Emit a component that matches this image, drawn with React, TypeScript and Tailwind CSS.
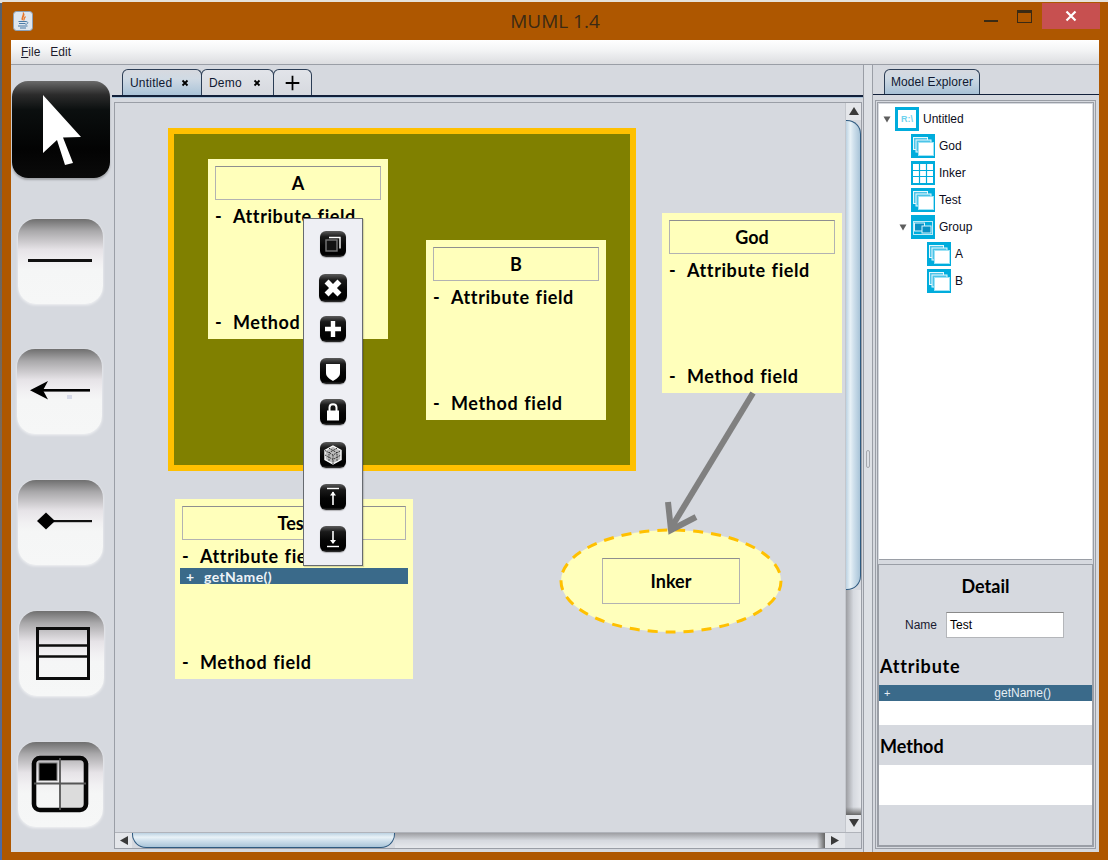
import React from "react";

const COMIC = "font-['Lato','Liberation_Sans',sans-serif] font-bold";
const ARIAL = "font-['Liberation_Sans',Arial,sans-serif]";

function BlackBtn({ className, children }: { className: string; children: React.ReactNode }) {
  return (
    <div className={"rounded-[6px] bg-[linear-gradient(180deg,#5c5c5c_0%,#1a1a1a_22%,#050505_55%,#000_90%,#333_100%)] shadow-[0_1px_1px_rgba(0,0,0,0.25)] " + className}>
      {children}
    </div>
  );
}

function Glyph({ children, size = 26 }: { children: React.ReactNode; size?: number }) {
  return (
    <svg width={size} height={size} viewBox="0 0 26 26" className="block">
      {children}
    </svg>
  );
}

function PopupMenu() {
  return (
    <div className="absolute left-[188px] top-[115px] w-[60px] h-[348px] bg-[#eeeff4] border border-[#666a70] flex flex-col items-center pt-[12px] shadow-[1px_1px_1px_rgba(0,0,0,0.15)]">
      <BlackBtn className="w-[26px] h-[26px]">
        <Glyph>
          <path d="M9 6.5H20V17.5" fill="none" stroke="#fff" strokeWidth="1.4" />
          <rect x="6" y="9" width="11" height="11" fill="#111" stroke="#777" strokeWidth="1.4" />
        </Glyph>
      </BlackBtn>
      <BlackBtn className="w-[28px] h-[28px] mt-[17px]">
        <Glyph size={28}>
          <path d="M7 7L19 19M19 7L7 19" stroke="#fff" strokeWidth="5.2" />
        </Glyph>
      </BlackBtn>
      <BlackBtn className="w-[26px] h-[26px] mt-[14px]">
        <Glyph>
          <path d="M13 5V21M5 13H21" stroke="#fff" strokeWidth="4.4" />
        </Glyph>
      </BlackBtn>
      <BlackBtn className="w-[26px] h-[26px] mt-[16px]">
        <Glyph>
          <path d="M6 6H20V15C20 19 16 21 13 23C10 21 6 19 6 15Z" fill="#fff" />
        </Glyph>
      </BlackBtn>
      <BlackBtn className="w-[26px] h-[26px] mt-[15px]">
        <Glyph>
          <rect x="7" y="11.5" width="12" height="10" fill="#fff" />
          <path d="M9.5 12V8.5C9.5 4 16.5 4 16.5 8.5V12" fill="none" stroke="#fff" strokeWidth="2" />
        </Glyph>
      </BlackBtn>
      <BlackBtn className="w-[26px] h-[26px] mt-[17px]">
        <Glyph>
          <path d="M13 4L21 8.5V17.5L13 22L5 17.5V8.5Z" fill="#bbb" stroke="#fff" strokeWidth="1.4" />
          <path d="M5 8.5L13 13L21 8.5M13 13V22M9 6.2L17 10.8V19.8M17 6.2L9 10.8V19.8M5 13L13 17.5L21 13" fill="none" stroke="#222" strokeWidth="0.9" strokeDasharray="1.6 1" />
        </Glyph>
      </BlackBtn>
      <BlackBtn className="w-[26px] h-[26px] mt-[16px]">
        <Glyph>
          <path d="M7 4.5H19" stroke="#fff" strokeWidth="1.4" />
          <path d="M13 8V21" stroke="#fff" strokeWidth="1.6" />
          <path d="M10 11.5L13 7.5L16 11.5Z" fill="#fff" />
        </Glyph>
      </BlackBtn>
      <BlackBtn className="w-[26px] h-[26px] mt-[16px]">
        <Glyph>
          <path d="M7 20.5H19" stroke="#fff" strokeWidth="1.4" />
          <path d="M13 5V17" stroke="#fff" strokeWidth="1.6" />
          <path d="M10 14L13 18L16 14Z" fill="#fff" />
        </Glyph>
      </BlackBtn>
    </div>
  );
}

function Field({ children, className = "" }: { children: React.ReactNode; className?: string }) {
  return (
    <div className={COMIC + " flex text-[18px] leading-[24px] text-black whitespace-nowrap [word-spacing:1px] tracking-[0.6px] " + className}>
      <span className="w-[18px]">-</span>
      <span>{children}</span>
    </div>
  );
}

function Header({ children, h = "h-[34px]" }: { children: React.ReactNode; h?: string }) {
  return (
    <div className={"border border-[#b2b2b2] border-t-[#8f8f8f] flex items-center justify-center " + h}>
      <span className={COMIC + " text-[18px] text-black"}>{children}</span>
    </div>
  );
}

function ClassNode({ pos, title }: { pos: string; title: string }) {
  return (
    <div className={"absolute bg-[#ffffbb] flex flex-col px-[7px] pt-[7px] pb-[5px] w-[180px] h-[180px] " + pos}>
      <Header>{title}</Header>
      <Field className="mt-[4px]">Attribute field</Field>
      <Field className="mt-auto">Method field</Field>
    </div>
  );
}

function TestNode() {
  return (
    <div className="absolute left-[60px] top-[396px] w-[238px] h-[180px] bg-[#ffffbb] flex flex-col pt-[7px] pb-[5px]">
      <div className="mx-[7px]">
        <Header>Test</Header>
      </div>
      <Field className="mx-[7px] mt-[4px]">Attribute field</Field>
      <div className={"mx-[5px] h-[16px] bg-[#3a6a8a] text-[#eef4f8] flex items-center pl-[6px] text-[14px] tracking-[0.4px] " + COMIC}>
        <span className="w-[18px]">+</span>
        <span>getName()</span>
      </div>
      <Field className="mx-[7px] mt-auto">Method field</Field>
    </div>
  );
}

function Canvas() {
  return (
    <div className="relative flex-1 overflow-hidden">
      <div className="absolute left-[53px] top-[25px] w-[468px] h-[343px] border-[6px] border-[#ffc000] bg-[#808000]" />
      <ClassNode pos="left-[93px] top-[56px]" title="A" />
      <ClassNode pos="left-[311px] top-[137px]" title="B" />
      <ClassNode pos="left-[547px] top-[110px]" title="God" />
      <TestNode />
      <svg className="absolute left-[440px] top-[285px]" width="240" height="250" viewBox="0 0 240 250">
        <ellipse cx="116" cy="193" rx="110" ry="51" fill="#ffffbb" stroke="#ffc000" strokeWidth="3" strokeDasharray="10 8" />
        <path d="M198 5L116 140" stroke="#808080" strokeWidth="6" fill="none" />
        <path d="M113 114L116 142L141 129" stroke="#808080" strokeWidth="6" fill="none" />
      </svg>
      <div className="absolute left-[487px] top-[455px] w-[138px] h-[46px] border border-[#b2b2b2] border-t-[#8f8f8f] flex items-center justify-center">
        <span className={COMIC + " text-[18px] text-black"}>Inker</span>
      </div>
      <PopupMenu />
    </div>
  );
}

function Triangle({ dir }: { dir: "up" | "down" | "left" | "right" }) {
  const d = {
    up: "M0 8L5 0L10 8Z",
    down: "M0 0L10 0L5 8Z",
    left: "M9 0V9L1 4.5Z",
    right: "M1 0V9L9 4.5Z",
  }[dir];
  return (
    <svg width="10" height="9" viewBox="0 0 10 9" className="block">
      <path d={d} fill="#3a3a3a" />
    </svg>
  );
}

function VScroll() {
  return (
    <div className="w-[16px] flex flex-col border-l border-[#c4c7cd]">
      <div className="h-[17px] bg-[#e4e6ea] flex items-center justify-center">
        <Triangle dir="up" />
      </div>
      <div className="h-[470px] w-[15px] rounded-r-[14px] border border-l-0 border-[#2f5a80] bg-[linear-gradient(90deg,#bcd2e2_0%,#e9f2f7_30%,#cfe0ec_55%,#a9c4d8_100%)]" />
      <div className="flex-1 bg-[linear-gradient(90deg,#9d9ea2_0%,#d6d9df_50%,#e6e8ec_100%)] flex flex-col justify-end">
        <div className="h-[8px] bg-[linear-gradient(180deg,transparent,#666)]" />
      </div>
      <div className="h-[17px] bg-[#e4e6ea] flex items-center justify-center">
        <Triangle dir="down" />
      </div>
    </div>
  );
}

function HScroll() {
  return (
    <div className="h-[16px] flex border-t border-[#b0b3ba]">
      <div className="w-[17px] bg-[#e4e6ea] flex items-center justify-center">
        <Triangle dir="left" />
      </div>
      <div className="w-[263px] h-[15px] rounded-b-[14px] border border-t-0 border-[#2f5a80] bg-[linear-gradient(180deg,#bcd2e2_0%,#e9f2f7_30%,#cfe0ec_55%,#a9c4d8_100%)]" />
      <div className="flex-1 bg-[linear-gradient(180deg,#9d9ea2_0%,#d6d9df_50%,#e6e8ec_100%)] flex justify-end">
        <div className="w-[8px] bg-[linear-gradient(90deg,transparent,#666)]" />
      </div>
      <div className="w-[20px] bg-[#e4e6ea] flex items-center justify-center">
        <Triangle dir="right" />
      </div>
      <div className="w-[16px] bg-[#d6d9df]" />
    </div>
  );
}

function Tab({ label, active, close, w }: { label?: string; active?: boolean; close?: boolean; w: string }) {
  return (
    <div
      className={
        "h-[26px] rounded-t-[6px] border border-b-0 border-[#2b3d55] flex items-center -mr-px " +
        w +
        (active
          ? " bg-[linear-gradient(180deg,#d6d9df_0%,#d0dae4_35%,#aac3d8_100%)]"
          : " bg-[linear-gradient(180deg,#e2e4e9_0%,#d6d9df_100%)]")
      }
    >
      {label ? (
        <span className={ARIAL + " text-[12px] text-[#0f1830] pl-[7px] tracking-[0.2px]"}>{label}</span>
      ) : (
        <svg width="38" height="24" viewBox="0 0 38 24" className="block">
          <path d="M19 4.5V19.5M12 12H26" stroke="#000" strokeWidth="1.8" />
        </svg>
      )}
      {close && (
        <svg width="8" height="8" viewBox="0 0 8 8" className="block ml-auto mr-[12px]">
          <path d="M1.5 1.5L6.5 6.5M6.5 1.5L1.5 6.5" stroke="#000" strokeWidth="1.8" />
        </svg>
      )}
    </div>
  );
}

function WhiteBtn({ className, children }: { className: string; children: React.ReactNode }) {
  return (
    <div className={"w-[85px] h-[85px] rounded-[18px] bg-[linear-gradient(180deg,#6f6f6f_0%,#a9a8aa_14%,#e6e3e7_36%,#f1f0f2_50%,#f5f6f6_60%,#f6f7f7_100%)] shadow-[0_1px_3px_rgba(255,255,255,0.7)] " + className}>
      <svg width="85" height="85" viewBox="0 0 85 85" className="block">
        {children}
      </svg>
    </div>
  );
}

function Toolbar() {
  return (
    <div className="w-[103px] flex flex-col">
      <div className="ml-[1px] mt-[16px] w-[98px] h-[97px] rounded-[16px] bg-[linear-gradient(180deg,#6a6a6a_0%,#2c2c2c_14%,#0b0f0f_30%,#030303_70%,#0a0a0a_100%)] shadow-[0_2px_2px_rgba(0,0,0,0.25)]">
        <svg width="98" height="97" viewBox="0 0 98 97" className="block">
          <path d="M31 14L69 56L51 56.5L61 82L53 84L45 59L31 72Z" fill="#fff" />
        </svg>
      </div>
      <WhiteBtn className="ml-[7px] mt-[41px]">
        <rect x="10" y="40" width="64" height="3" fill="#111" />
      </WhiteBtn>
      <WhiteBtn className="ml-[6px] mt-[45px]">
        <rect x="25" y="40" width="48" height="2.6" fill="#000" />
        <path d="M13 41.3L31 32L26 41.3L31 50.5Z" fill="#000" />
        <rect x="50" y="46" width="5" height="4" fill="#d6d9e8" />
      </WhiteBtn>
      <WhiteBtn className="ml-[7px] mt-[46px]">
        <rect x="28" y="40" width="46" height="2.2" fill="#111" />
        <path d="M28 32.5L37 41L28 49.5L19 41Z" fill="#000" />
      </WhiteBtn>
      <WhiteBtn className="ml-[8px] mt-[46px]">
        <rect x="18.5" y="17.5" width="51" height="50" fill="none" stroke="#0c0c0c" strokeWidth="3" />
        <path d="M18 34.5H70M18 45.5H70" stroke="#0c0c0c" strokeWidth="2.4" />
      </WhiteBtn>
      <WhiteBtn className="ml-[7px] mt-[46px]">
        <path d="M43 42H68V67H43Z" fill="#dcdcdc" />
        <rect x="16" y="16" width="52" height="52" rx="6" fill="none" stroke="#060606" strokeWidth="4.6" />
        <path d="M42 16V68M16 41.5H68" stroke="#555" strokeWidth="1.8" />
        <rect x="21" y="21" width="18" height="17.5" fill="#000" stroke="#777" strokeWidth="1" />
      </WhiteBtn>
    </div>
  );
}

function TreeIconBox({ children }: { children: React.ReactNode }) {
  return (
    <svg width="24" height="24" viewBox="0 0 24 24" className="block shrink-0">
      <rect width="24" height="24" fill="#00acdc" />
      {children}
    </svg>
  );
}

function StackIcon() {
  return (
    <TreeIconBox>
      <rect x="2.5" y="3.5" width="14" height="12" fill="#4cc4e8" stroke="#e6f8fd" />
      <rect x="5" y="6" width="15" height="12" fill="#4cc4e8" stroke="#e6f8fd" />
      <rect x="7.5" y="8.5" width="15" height="13" fill="#fff" stroke="#9fe3f5" />
    </TreeIconBox>
  );
}

function GridIcon() {
  return (
    <TreeIconBox>
      <rect x="2" y="3" width="20" height="19" fill="#fff" />
      <path d="M8.5 3V22M15.5 3V22M2 9.5H22M2 15.5H22" stroke="#00acdc" strokeWidth="1.2" />
    </TreeIconBox>
  );
}

function GroupIcon() {
  return (
    <TreeIconBox>
      <rect x="2.5" y="6.5" width="19" height="13" fill="none" stroke="#bfeaf7" />
      <rect x="3.5" y="8" width="10" height="8" fill="#0a90c4" stroke="#d9f3fb" />
      <rect x="11" y="11" width="9" height="7" fill="#0a90c4" stroke="#d9f3fb" />
    </TreeIconBox>
  );
}

function RootIcon() {
  return (
    <TreeIconBox>
      <rect x="3" y="3" width="18" height="18" fill="#fff" />
      <text x="12" y="15" textAnchor="middle" fontSize="9" fontWeight="700" fill="#6fd2ee" fontFamily="Liberation Sans">R:\</text>
    </TreeIconBox>
  );
}

function Caret() {
  return (
    <svg width="8" height="7" viewBox="0 0 8 7" className="block shrink-0">
      <path d="M0.5 0.5H7.5L4 6.5Z" fill="#5e5e5e" />
    </svg>
  );
}

function TreeRow({ pad, caret, icon, label }: { pad: string; caret?: boolean; icon: React.ReactNode; label: string }) {
  return (
    <div className={"h-[27px] flex items-start gap-[4px] " + pad}>
      {caret && <div className="w-[8px] -ml-[12px] h-[24px] flex items-center"><Caret /></div>}
      {icon}
      <span className={ARIAL + " text-[12px] leading-[24px] text-[#0c0c20]"}>{label}</span>
    </div>
  );
}

function RightPanel() {
  return (
    <div className="w-[226px] flex flex-col">
      <div className="h-[30px] pt-[4px] pl-[11px] border-b border-[#12203a]">
        <div className="w-[96px] h-[25px] rounded-t-[6px] border border-b-0 border-[#2b3d55] bg-[linear-gradient(180deg,#d6d9df_0%,#ced9e3_35%,#a8c1d6_100%)] flex items-center justify-center">
          <span className={ARIAL + " text-[12px] text-[#0f1830] tracking-[0.1px]"}>Model Explorer</span>
        </div>
      </div>
      <div className="mt-[5px] ml-[2px] w-[221px] h-[749px] border border-[#9a9ea6] p-[1px]">
        <div className="h-full border border-[#9a9ea6] flex flex-col">
          <div className="mx-[1px] mt-[1px] h-[457px] bg-white border-b border-[#9a9ea6] pt-[3px]">
            <TreeRow pad="pl-[16px]" caret icon={<RootIcon />} label="Untitled" />
            <TreeRow pad="pl-[32px]" icon={<StackIcon />} label="God" />
            <TreeRow pad="pl-[32px]" icon={<GridIcon />} label="Inker" />
            <TreeRow pad="pl-[32px]" icon={<StackIcon />} label="Test" />
            <TreeRow pad="pl-[32px]" caret icon={<GroupIcon />} label="Group" />
            <TreeRow pad="pl-[48px]" icon={<StackIcon />} label="A" />
            <TreeRow pad="pl-[48px]" icon={<StackIcon />} label="B" />
          </div>
          <div className="mt-[4px] h-[282px] border border-[#9a9ea6] flex flex-col">
            <div className={COMIC + " text-[18px] leading-[24px] text-black text-center mt-[9px]"}>Detail</div>
            <div className="mt-[14px] flex items-center pl-[26px] gap-[9px]">
              <span className={ARIAL + " text-[12px] text-[#1a1a30]"}>Name</span>
              <div className={ARIAL + " w-[118px] h-[26px] bg-white border border-[#b4b6ba] border-t-[#8a8a8a] flex items-center pl-[3px] text-[12px] text-black"}>Test</div>
            </div>
            <div className={COMIC + " text-[18px] leading-[24px] text-black mt-[16px] ml-[1px] tracking-[0.8px]"}>Attribute</div>
            <div className="mt-[7px] h-[16px] bg-[#3a6a8a] flex items-center justify-between pl-[5px] pr-[41px]">
              <span className={ARIAL + " text-[11px] text-[#e6eef4]"}>+</span>
              <span className={ARIAL + " text-[12px] text-[#e6eef4]"}>getName()</span>
            </div>
            <div className="h-[24px] bg-white" />
            <div className={COMIC + " text-[18px] leading-[24px] text-black mt-[9px] ml-[1px]"}>Method</div>
            <div className="mt-[7px] h-[40px] bg-white" />
          </div>
        </div>
      </div>
    </div>
  );
}

export default function App() {
  return (
    <div className="w-[1108px] h-[860px] overflow-hidden bg-[linear-gradient(180deg,#e6e2da_0px,#e6e2da_3px,#55606e_3px,#7a6a5a_50%,#4a6aa8_100%)] pl-[2px] pt-[2px]">
      <div className="w-[1106px] h-[858px] bg-[#ae5700] flex flex-col px-[9px] pb-[8px] rounded-tl-[1px]">
        <div className="h-[38px] flex items-start -mx-[9px]">
          <div className="w-[130px] pl-[11px] pt-[9px]">
            <svg width="20" height="20" viewBox="0 0 20 20" className="block">
              <rect x="0.5" y="0.5" width="19" height="19" rx="3" fill="#dfe6ee" stroke="#8aa0b8" />
              <path d="M10.5 2.5C12.5 5 8 6.5 9.5 9C8 7 10.5 5.5 10.5 2.5ZM12.5 5.5C11.5 7 10.5 7.5 11 9.5" fill="none" stroke="#e8762a" strokeWidth="1.3" />
              <path d="M5.5 10.5H13M6 12.5H12.5M5 15H14.5M7 17H13" stroke="#4a7aa6" strokeWidth="1" fill="none" />
              <path d="M13 10.5C15.5 10.5 15.5 13 12.5 13.5" fill="none" stroke="#4a7aa6" strokeWidth="0.9" />
            </svg>
          </div>
          <div className="flex-1 text-center pt-[6px] text-[19px] leading-[26px] text-[#3b2a14] font-['Open_Sans',sans-serif]">MUML 1.4</div>
          <div className="w-[130px] flex justify-end items-start pr-[8px]">
            <div className="mt-[18px] mr-[19px] w-[14px] h-[2px] bg-[#3a2a14]" />
            <div className="mt-[8px] mr-[10px] w-[15px] h-[13px] border border-[#3a2a14] border-t-[3px]" />
            <div className="mt-[1px] w-[58px] h-[26px] bg-[#c75050] flex items-center justify-center">
              <svg width="12" height="12" viewBox="0 0 12 12" className="block">
                <path d="M1.5 1.5L10.5 10.5M10.5 1.5L1.5 10.5" stroke="#fff" strokeWidth="2.2" />
              </svg>
            </div>
          </div>
        </div>

        <div className="h-[25px] bg-[linear-gradient(180deg,#ffffff_0%,#f4f5f6_40%,#dcdde0_100%)] border-b border-[#9a9ea6] flex items-center pl-[10px] gap-[10px]">
          <span className={ARIAL + " text-[12px] text-[#1c1c2c]"}><span className="underline">F</span>ile</span>
          <span className={ARIAL + " text-[12px] text-[#1c1c2c]"}>Edit</span>
        </div>

        <div className="flex-1 flex bg-[#d6d9df] min-h-0">
          <Toolbar />
          <div className="w-[749px] flex flex-col">
            <div className="h-[30px] pt-[4px] pl-[8px] flex items-start shrink-0">
              <Tab label="Untitled" active close w="w-[80px]" />
              <Tab label="Demo" close w="w-[73px]" />
              <Tab w="w-[39px]" />
            </div>
            <div className="-ml-[2px] h-[2px] shrink-0 bg-[#12203a]" />
            <div className="-ml-[2px] h-[1px] shrink-0 bg-[#aac3d8]" />
            <div className="mt-[4px] h-[747px] shrink-0 mr-[1px] border border-[#9a9ea6] flex flex-col">
              <div className="flex-1 flex min-h-0">
                <Canvas />
                <VScroll />
              </div>
              <HScroll />
            </div>
          </div>
          <div className="w-[10px] border-x border-[#9a9ea6] bg-[#dde0e5] flex items-center justify-center">
            <div className="w-[4px] h-[18px] border border-[#a5a8ae] rounded-[2px]" />
          </div>
          <RightPanel />
        </div>
      </div>
    </div>
  );
}
